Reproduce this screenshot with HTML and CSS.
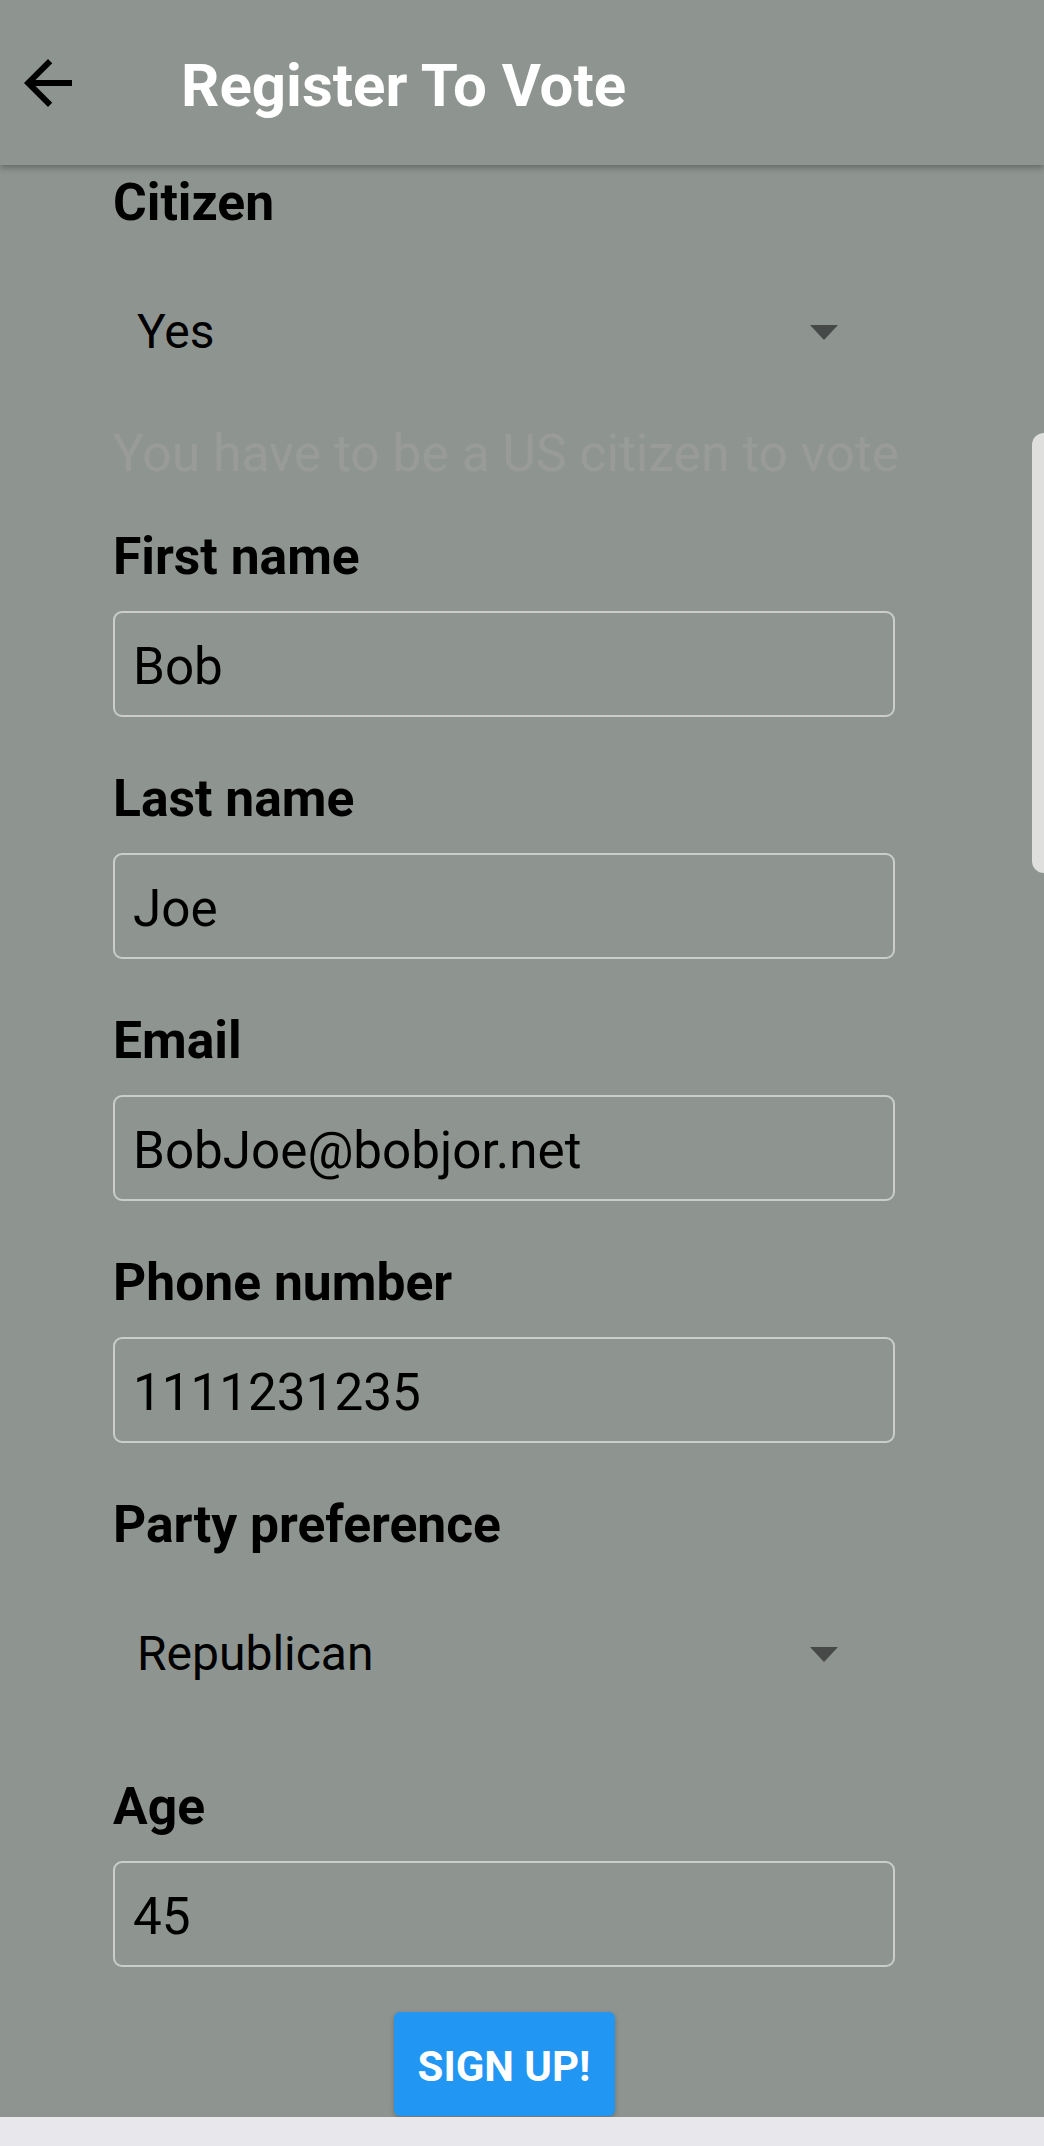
FILE: index.html
```html
<!DOCTYPE html>
<html lang="en">
<head>
<meta charset="utf-8">
<title>Register To Vote</title>
<link rel="stylesheet" href="styles.css">
</head>
<body>
<div class="screen">
  <header class="appbar">
    <button class="back" type="button" aria-label="Back">
      <svg class="back-icon" viewBox="0 0 24 24" width="72" height="72" aria-hidden="true">
        <path d="M20 11H7.83l5.59-5.59L12 4l-8 8 8 8 1.41-1.41L7.83 13H20v-2z"/>
      </svg>
    </button>
    <h1 class="title">Register To Vote</h1>
  </header>

  <main class="content">
    <form class="form">
      <div class="field field--hint">
        <label class="label">Citizen</label>
        <div class="select"><span class="select-value">Yes</span><span class="caret"></span></div>
        <p class="hint">You have to be a US citizen to vote</p>
      </div>
      <div class="field">
        <label class="label" for="first">First name</label>
        <input class="input" id="first" type="text" value="Bob">
      </div>
      <div class="field">
        <label class="label" for="last">Last name</label>
        <input class="input" id="last" type="text" value="Joe">
      </div>
      <div class="field">
        <label class="label" for="email">Email</label>
        <input class="input" id="email" type="text" value="BobJoe@bobjor.net">
      </div>
      <div class="field">
        <label class="label" for="phone">Phone number</label>
        <input class="input" id="phone" type="text" value="1111231235">
      </div>
      <div class="field field--select">
        <label class="label">Party preference</label>
        <div class="select"><span class="select-value">Republican</span><span class="caret"></span></div>
      </div>
      <div class="field">
        <label class="label" for="age">Age</label>
        <input class="input" id="age" type="text" value="45">
      </div>
      <button class="submit" type="button">SIGN UP!</button>
    </form>
    <div class="scrollbar"></div>
  </main>

  <div class="navbar"></div>
</div>
</body>
</html>
```

FILE: styles.css
```css
html, body {
  margin: 0;
  padding: 0;
}

body {
  font-family: Roboto, "Liberation Sans", sans-serif;
  background: #8e9590;
  color: #000;
}

.screen {
  width: 1044px;
  height: 2146px;
  display: flex;
  flex-direction: column;
  overflow: hidden;
  background: #8e9590;
}

/* ---------- App bar ---------- */
.appbar {
  position: relative;
  z-index: 2;
  flex: 0 0 165px;
  height: 165px;
  box-sizing: border-box;
  display: flex;
  align-items: center;
  padding-left: 12px;
  background: #8e9590;
  box-shadow: 0 3px 6px rgba(0, 0, 0, 0.28);
}

.back {
  width: 72px;
  height: 72px;
  padding: 0;
  margin: 0;
  border: 0;
  background: transparent;
  display: flex;
}

.back-icon {
  fill: #000;
}

.title {
  margin: 6px 0 0 97px;
  font-size: 60px;
  line-height: 60px;
  font-weight: 700;
  color: #fff;
}

/* ---------- Content ---------- */
.content {
  position: relative;
  flex: 1 1 auto;
  overflow: hidden;
}

.form {
  width: 782px;
  margin: 0 0 0 113px;
  padding-top: 8px;
  display: flex;
  flex-direction: column;
}

.field {
  margin-top: 52px;
  display: flex;
  flex-direction: column;
}

.field:first-child {
  margin-top: 0;
}

.field--hint + .field {
  margin-top: 43px;
}

.field--select + .field {
  margin-top: 67px;
}

.label {
  display: block;
  font-size: 51.6px;
  line-height: 60px;
  font-weight: 700;
  color: #000;
}

.select {
  margin-top: 43px;
  height: 112px;
  box-sizing: border-box;
  display: flex;
  align-items: center;
  justify-content: space-between;
  padding: 0 57px 0 24px;
  font-size: 48px;
  line-height: 48px;
  color: #000;
}

.caret {
  width: 0;
  height: 0;
  border-left: 14px solid transparent;
  border-right: 14px solid transparent;
  border-top: 15px solid #464947;
}

.hint {
  margin: 36px 0 0;
  font-size: 51.6px;
  line-height: 60px;
  color: #999b99;
  white-space: nowrap;
}

.input {
  display: block;
  margin-top: 24px;
  width: 782px;
  height: 106px;
  box-sizing: border-box;
  padding: 4px 17px 0 18px;
  border: 2px solid #cbcdca;
  border-radius: 9px;
  background: transparent;
  font-family: Roboto, "Liberation Sans", sans-serif;
  font-size: 51.2px;
  color: #000;
  outline: none;
}

.submit {
  margin: 45px auto 0;
  width: 221px;
  height: 104px;
  box-sizing: border-box;
  padding: 5px 0 0;
  border: 0;
  border-radius: 6px;
  background: #2196f3;
  color: #fff;
  font-family: Roboto, "Liberation Sans", sans-serif;
  font-size: 42px;
  font-weight: 700;
  box-shadow: 0 2px 5px rgba(0, 0, 0, 0.25);
}

/* overlay scroll indicator */
.scrollbar {
  position: absolute;
  top: 268px;
  right: 0;
  width: 12px;
  height: 440px;
  background: #dfe0de;
  border-radius: 12px 0 0 12px;
}

/* ---------- System nav area ---------- */
.navbar {
  flex: 0 0 29px;
  height: 29px;
  background: #e8e8ec;
}
```
